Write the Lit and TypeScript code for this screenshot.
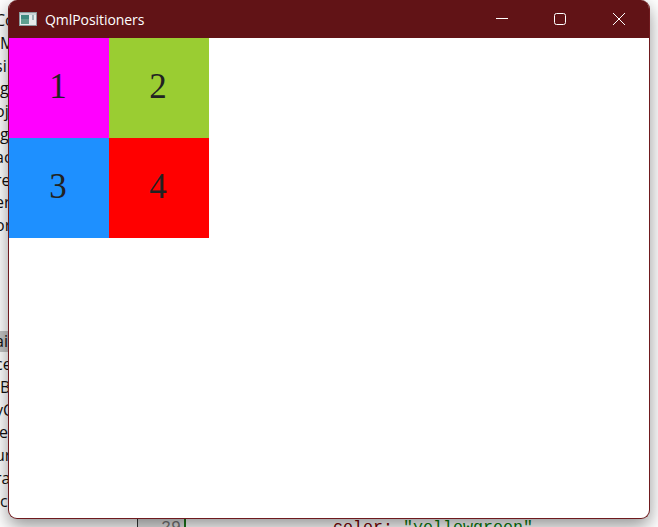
import { LitElement, html, css } from "lit";
import { customElement } from "lit/decorators.js";

const topRows = ["", "Co", "M", "si", "g", "oj", "g", "ac", "re", "er", "or"];
const lowRows = ["ai", "ce", "B", "yC", "le", "ur", "ra", "c"];
const cells = [
  { n: "1", c: "magenta" },
  { n: "2", c: "yellowgreen" },
  { n: "3", c: "dodgerblue" },
  { n: "4", c: "red" },
];

@customElement("app-root")
export class AppRoot extends LitElement {
  static styles = css`
    :host { display: block; }
    .desktop {
      position: relative;
      width: 658px;
      height: 527px;
      overflow: hidden;
      background: #fff;
      display: flex;
      flex-direction: column;
      font-family: "Open Sans", "Noto Sans", sans-serif;
    }
    .list { display: flex; flex-direction: column; width: 8px; }
    .row { height: 22.8px; line-height: 23px; font-size: 16px; color: #111; white-space: nowrap; }
    .row.first { height: 9px; }
    .row.shift { text-indent: -5px; }
    .gap { height: 94px; }
    .row.sel { background: #c4c4c4; margin-bottom: 1px; height: 21px; line-height: 21px; }
    .code {
      position: absolute;
      left: 137px;
      right: 0;
      bottom: 0;
      height: 9px;
      display: flex;
      border-left: 1px solid #333;
      font-family: "Liberation Mono", monospace;
      font-size: 16.67px;
      line-height: 19px;
      overflow: hidden;
    }
    .gutter { width: 48px; box-sizing: border-box; border-right: 2px solid #1c7a1c; text-align: right; padding-right: 3px; color: #777; background: #e4e4e4; }
    .source { padding-left: 147px; white-space: pre; color: #7a0000; }
    .source b { font-weight: 400; color: #0a7a0a; }
    .window {
      position: absolute;
      left: 8px;
      top: 0;
      width: 642px;
      height: 519px;
      box-sizing: border-box;
      border: 1px solid #6f1a1e;
      border-top: 0;
      border-radius: 9px;
      background: #fff;
      box-shadow: 0 7px 18px rgba(0, 0, 0, 0.42);
      display: flex;
      flex-direction: column;
      overflow: hidden;
    }
    .titlebar {
      height: 38px;
      flex: none;
      margin: 0 -1px;
      padding-right: 2px;
      background: #611316;
      color: #fff;
      display: flex;
      align-items: center;
      font-family: "Open Sans", sans-serif;
      font-size: 14px;
      letter-spacing: -0.06px;
    }
    .appicon { margin: 0 8px 0 11px; flex: none; display: block; }
    .title { flex: 1; }
    .ctl { width: 58px; height: 38px; display: block; flex: none; }
    .grid { display: grid; grid-template-columns: repeat(2, 100px); grid-auto-rows: 100px; }
    .cell {
      display: flex;
      align-items: center;
      justify-content: center;
      padding: 0 2px 3px 0;
      font-family: "Liberation Serif", serif;
      font-size: 35px;
      color: #222;
    }
  `;

  render() {
    const shift = (r: string) => (r.length > 1 ? "shift" : "");
    return html`
      <div class="desktop">
        <div class="list">
          ${topRows.map((r, i) => html`<div class="row ${i === 0 ? "first" : shift(r)}">${r}</div>`)}
          <div class="gap"></div>
          ${lowRows.map((r, i) => html`<div class="row ${i === 0 ? "sel" : ""} ${shift(r)}">${r}</div>`)}
        </div>
        <div class="code">
          <div class="gutter">29</div>
          <div class="source">color: <b>"yellowgreen"</b></div>
        </div>
        <div class="window">
          <div class="titlebar">
            <svg class="appicon" width="18" height="14" viewBox="0 0 18 14">
              <rect x="0.5" y="0.5" width="17" height="13" fill="#e6ecec" stroke="#8a9a9c" />
              <rect x="1" y="1" width="16" height="2" fill="#c9d4d6" />
              <rect x="2" y="3" width="8" height="9" fill="#3f8a80" />
              <rect x="2" y="7" width="8" height="5" fill="#5f9f8f" />
              <rect x="13" y="3" width="2" height="5" fill="#9fb4b8" />
            </svg>
            <span class="title">QmlPositioners</span>
            <svg class="ctl" viewBox="0 0 58 38"><path d="M22 18.5H34" stroke="#fff" fill="none" /></svg>
            <svg class="ctl" viewBox="0 0 58 38"><rect x="22.5" y="13.5" width="11" height="11" rx="2" stroke="#fff" fill="none" /></svg>
            <svg class="ctl" viewBox="0 0 58 38"><path d="M23 13L35 25M35 13L23 25" stroke="#fff" fill="none" /></svg>
          </div>
          <div class="grid">
            ${cells.map((c) => html`<div class="cell" style="background:${c.c}">${c.n}</div>`)}
          </div>
        </div>
      </div>
    `;
  }
}
